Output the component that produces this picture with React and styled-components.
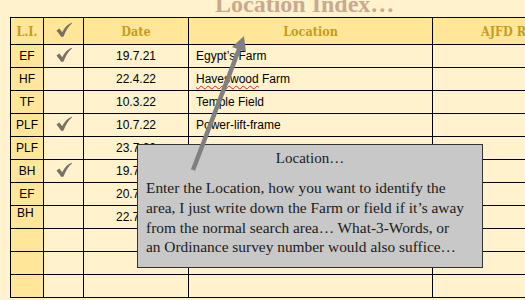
import React from "react"
import styled, { createGlobalStyle } from "styled-components"

const GlobalStyle = createGlobalStyle`
  html, body {
    margin: 0;
    padding: 0;
    background: #fff2cc;
  }
`

const Page = styled.div`
  position: relative;
  width: 525px;
  height: 300px;
  overflow: hidden;
  padding-left: 10px;
  box-sizing: border-box;
  background: #fff2cc;
`

const Title = styled.h1`
  margin: -8px 0 0 0;
  height: 25px;
  padding-left: 205px;
  font-family: "Liberation Serif", serif;
  font-weight: bold;
  font-size: 24px;
  line-height: 25px;
  color: #c9aa90;
  white-space: nowrap;
`

const Table = styled.table`
  border-collapse: collapse;
  table-layout: fixed;
  width: 580px;
`

const Head = styled.th`
  height: 26px;
  padding: 0;
  border: 1px solid #000;
  background: #ffe699;
  font-family: "DejaVu Serif Condensed", "DejaVu Serif", serif;
  font-weight: bold;
  font-size: 12.5px;
  color: #c49d1c;
  text-align: ${(p) => p.$align || "center"};
  padding-left: ${(p) => p.$pad || 0}px;
  white-space: nowrap;
  overflow: hidden;
`

const Cell = styled.td`
  height: 22px;
  padding: 0 0 0 ${(p) => p.$pad || 0}px;
  border: 1px solid #000;
  background: ${(p) => (p.$dark ? "#ffe699" : "#fff2cc")};
  font-family: "Liberation Sans", Arial, sans-serif;
  font-size: 12px;
  color: #000;
  text-align: ${(p) => p.$align || "center"};
  vertical-align: ${(p) => p.$valign || "middle"};
  white-space: nowrap;
  overflow: hidden;
`

const Squiggle = styled.span`
  text-decoration: underline wavy #e02020;
  text-decoration-thickness: 1px;
  text-underline-offset: 2px;
`

const Callout = styled.div`
  position: absolute;
  left: 137px;
  top: 144px;
  width: 346px;
  height: 124px;
  background: #c8c8c8;
  border: 1px solid #333;
  font-family: "Liberation Serif", serif;
  color: #1a1a1a;
  padding: 4px 0 0 8px;
  box-sizing: border-box;
`

const CalloutTitle = styled.div`
  text-align: center;
  font-size: 15px;
  line-height: 18px;
  padding-right: 8px;
  margin-bottom: 11px;
`

const CalloutBody = styled.p`
  margin: 0;
  font-size: 15.4px;
  line-height: 19.8px;
  white-space: nowrap;
`

const Arrow = styled.svg`
  position: absolute;
  left: 0;
  top: 0;
  pointer-events: none;
`

const Check = () => (
  <svg width="18" height="16" viewBox="0 0 18 16">
    <path
      d="M1.5 8.6 L4.4 6.6 L7.2 10.2 C9.5 5.6 12.6 2.4 16.6 0.8 L17 1.6 C13.6 4.2 10.8 8.6 8.6 14.6 L6.4 15 Z"
      fill="#7b7062"
    />
  </svg>
)

const rows = [
  { li: "EF", check: true, date: "19.7.21", loc: "Egypt’s Farm" },
  { li: "HF", date: "22.4.22", loc: <><Squiggle>Haveswood</Squiggle> Farm</> },
  { li: "TF", date: "10.3.22", loc: "Temple Field" },
  { li: "PLF", check: true, date: "10.7.22", loc: "Power-lift-frame" },
  { li: "PLF", date: "23.7.22", loc: "" },
  { li: "BH", check: true, date: "19.7.22", loc: "" },
  { li: "EF", date: "20.7.22", loc: "" },
  { li: "BH", date: "22.7.22", loc: "", top: true },
  { li: "" },
  { li: "" },
  { li: "" },
]

const App = () => (
  <Page>
    <GlobalStyle />
    <Title>Location Index…</Title>
    <Table>
      <colgroup>
        <col style={{ width: 33 }} />
        <col style={{ width: 40 }} />
        <col style={{ width: 105 }} />
        <col style={{ width: 244 }} />
        <col style={{ width: 158 }} />
      </colgroup>
      <thead>
        <tr>
          <Head>L.I.</Head>
          <Head><Check /></Head>
          <Head>Date</Head>
          <Head>Location</Head>
          <Head $align="left" $pad={48}>AJFD Ref</Head>
        </tr>
      </thead>
      <tbody>
        {rows.map((r, i) => (
          <tr key={i}>
            <Cell $dark $align={r.top ? "left" : "center"} $valign={r.top ? "top" : "middle"} $pad={r.top ? 6 : 0}>
              {r.li}
            </Cell>
            <Cell>{r.check && <Check />}</Cell>
            <Cell>{r.date}</Cell>
            <Cell $align="left" $pad={7}>{r.loc}</Cell>
            <Cell />
          </tr>
        ))}
      </tbody>
    </Table>
    <Callout>
      <CalloutTitle>Location…</CalloutTitle>
      <CalloutBody>
        Enter the Location, how you want to identify the
        <br />
        area, I just write down the Farm or field if it’s away
        <br />
        from the normal search area… What-3-Words, or
        <br />
        an Ordinance survey number would also suffice…
      </CalloutBody>
    </Callout>
    <Arrow width="525" height="300" viewBox="0 0 525 300">
      <line x1="193" y1="170" x2="239.5" y2="48" stroke="#808080" strokeWidth="4.5" />
      <polygon points="244,36 246,52 232,47" fill="#808080" />
    </Arrow>
  </Page>
)

export default App
